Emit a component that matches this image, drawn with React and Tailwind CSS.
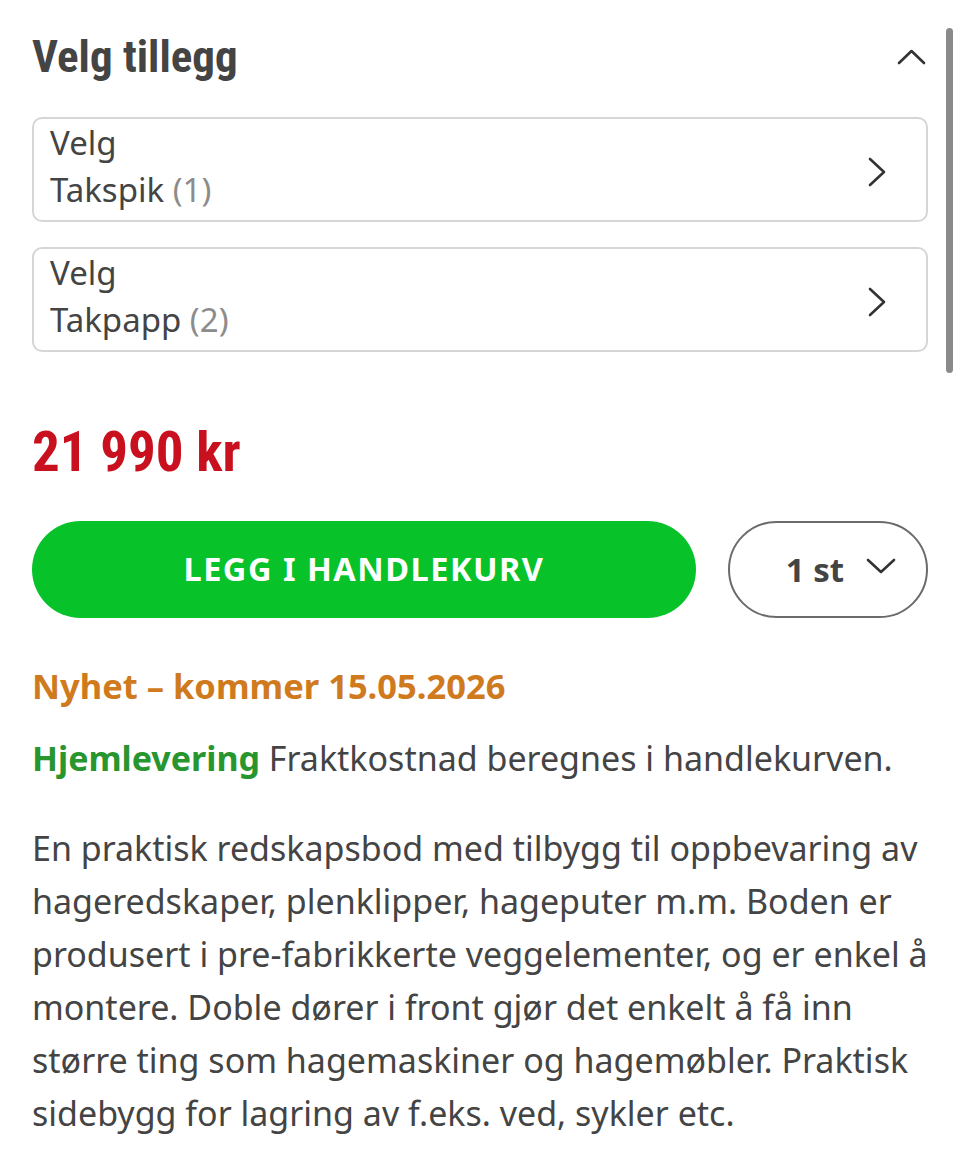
const narrow = "font-[Roboto,sans-serif] font-stretch-condensed";

const addons = [
  { name: "Takspik", count: 1 },
  { name: "Takpapp", count: 2 },
];

const lines = [
  "En praktisk redskapsbod med tilbygg til oppbevaring av",
  "hageredskaper, plenklipper, hageputer m.m. Boden er",
  "produsert i pre-fabrikkerte veggelementer, og er enkel å",
  "montere. Doble dører i front gjør det enkelt å få inn",
  "større ting som hagemaskiner og hagemøbler. Praktisk",
  "sidebygg for lagring av f.eks. ved, sykler etc.",
];

function Chevron({ dir, className }) {
  // enkel vinkel, tegnet i egen boks
  const pts = {
    up: "2,15 14.5,3 27,15",
    down: "2,2 15,14 28,2",
    right: "2,2 16,15 2,28",
  }[dir];
  const box = { up: "0 0 29 17", down: "0 0 30 16", right: "0 0 18 30" }[dir];
  return (
    <svg viewBox={box} className={className} fill="none" stroke="#333" strokeWidth="2.6" strokeLinecap="round" strokeLinejoin="round">
      <polyline points={pts} />
    </svg>
  );
}

export default function App() {
  return (
    <div className="relative min-h-[1156px] w-[960px] bg-white font-['Noto_Sans',sans-serif] text-[#444]">
      {/* scrollbar */}
      <div className="absolute right-[7px] top-[28px] h-[345px] w-[7px] rounded-full bg-[#8a8a8a]" />

      <div className="pl-[32px] pr-[32px] pt-[35px]">
        {/* header */}
        <div className="flex items-center justify-between">
          <h2 className={`${narrow} text-[45px] font-bold leading-[44px] text-[#444]`}>
            Velg tillegg
          </h2>
          <Chevron dir="up" className="mr-[2px] mt-[-2px] h-[17px] w-[29px]" />
        </div>

        {/* tillegg */}
        <div className="mt-[38px] flex flex-col gap-[25px]">
          {addons.map((a) => (
            <div
              key={a.name}
              className="flex h-[105px] items-center justify-between rounded-[10px] border-2 border-[#d6d6d6] pl-[16px] pr-[40px]"
            >
              <div className="self-start text-[33px] leading-[47px]">
                <div>Velg</div>
                <div>
                  {a.name} <span className="text-[#8c8c8c]">({a.count})</span>
                </div>
              </div>
              <Chevron dir="right" className="mt-[5px] h-[30px] w-[18px]" />
            </div>
          ))}
        </div>

        {/* pris */}
        <div className="mt-[73px] font-[Roboto,sans-serif] text-[55px] font-bold leading-[55px] text-[#c8101e] font-stretch-semi-condensed">
          21 990 kr
        </div>

        {/* knapper */}
        <div className="mt-[41px] flex items-center gap-[32px]">
          <button className="flex h-[97px] w-[664px] items-center justify-center rounded-full bg-[#07c229] text-[32.5px] font-bold tracking-[1.5px] text-white">
            LEGG I HANDLEKURV
          </button>
          <button className="flex h-[97px] flex-1 items-center justify-center gap-[22px] rounded-full border-2 border-[#6b6b6b] pl-[26px] text-[33px] font-bold text-[#444]">
            <span>1 st</span>
            <Chevron dir="down" className="mt-[-8px] h-[16px] w-[30px]" />
          </button>
        </div>

        {/* nyhet */}
        <div className="mt-[41px] text-[34.5px] font-bold leading-[53px] text-[#d07a1e]">
          Nyhet – kommer 15.05.2026
        </div>

        <div className="mt-[20px] text-[34px] leading-[53px]">
          <span className="font-bold text-[#27962f]">Hjemlevering</span> Fraktkostnad beregnes i handlekurven.
        </div>

        <p className="mt-[37px] text-[34px] leading-[53px]">
          {lines.map((l) => (
            <span key={l} className="block whitespace-nowrap">
              {l}
            </span>
          ))}
        </p>
      </div>
    </div>
  );
}
